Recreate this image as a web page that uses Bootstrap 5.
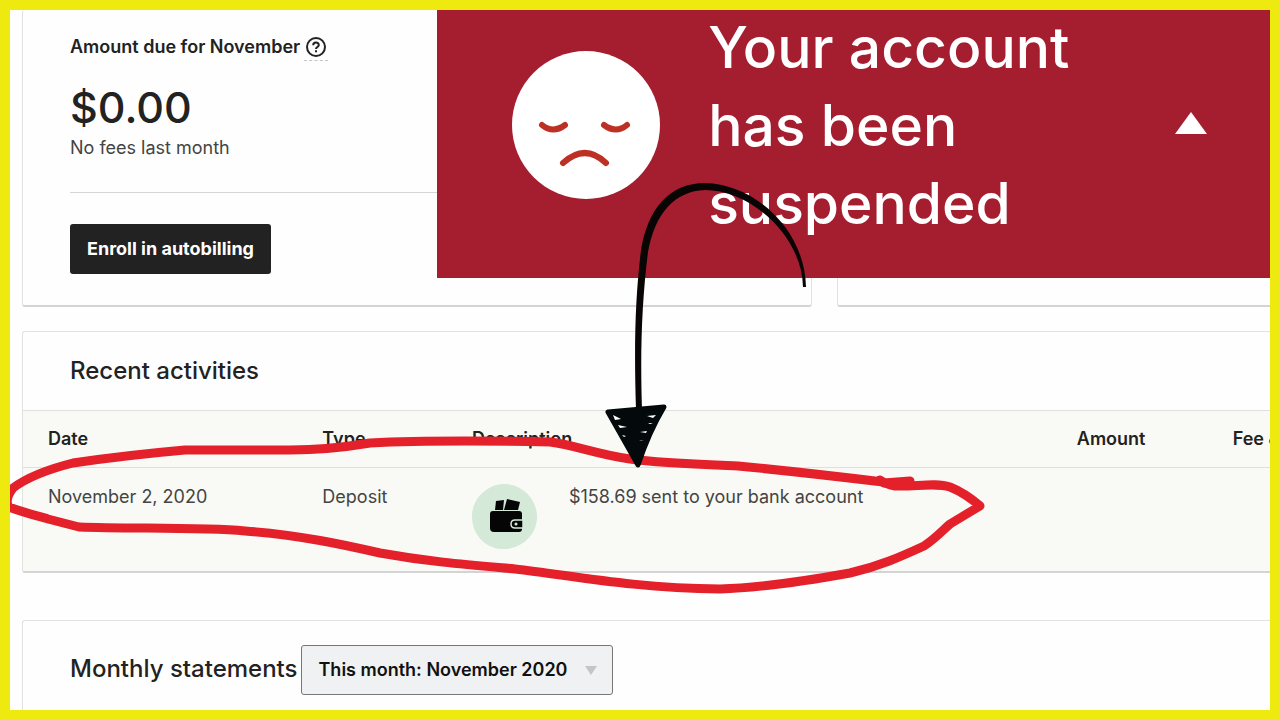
<!DOCTYPE html>
<html lang="en">
<head>
<meta charset="utf-8">
<meta name="viewport" content="width=device-width, initial-scale=1">
<title>Payment account</title>
<link href="https://cdn.jsdelivr.net/npm/bootstrap@5.3.0/dist/css/bootstrap.min.css" rel="stylesheet">
<style>
  body { font-family: Inter, "Liberation Sans", sans-serif; font-size: 18px; line-height: 26px; color: #222; background: #fefefe; }
  .frame { height: 100vh; border: 10px solid #eee90f; }
  .page-body { padding-left: 12px; }
  .summary-grid { display: grid; grid-template-columns: minmax(0, 790fr) minmax(0, 433fr); column-gap: 25px; margin-bottom: 24px; }
  .panel { background: #fefefe; border: 1px solid #e1e3df; border-bottom: 2px solid #d4d4d4; border-radius: 3px; }
  .panel-cut { border-right: 0; border-top-right-radius: 0; border-bottom-right-radius: 0; }
  .summary { border-top: 0; padding: 23px 47px 31px; }
  .due-label { font-size: 18px; line-height: 28px; font-weight: 600; }
  .help { border-bottom: 1px dashed #c4c4c4; width: 24px; height: 28px; color: #222; }
  .due-sum { font-size: 43px; line-height: 56px; font-weight: 500; margin-top: 18px; }
  .soft { color: #444; }
  .divider { margin: 31px 0; border-top: 1px solid #d5d5d5; opacity: 1; }
  .btn-enroll { background: #222; color: #fff; font-size: 18px; font-weight: 700; height: 50px; border-radius: 3px; padding: 0 16px; line-height: 26px; }
  .btn-enroll:hover { background: #000; color: #fff; }
  .panel-title { font-size: 24px; line-height: 32px; font-weight: 500; }
  .panel-head { padding: 23px 47px; }
  .activity { table-layout: fixed; background: #f9faf5; border-top: 1px solid #dfe0dc; }
  .activity th { font-weight: 600; padding: 15px 24px 15px 25px; }
  .activity td { padding: 16px 24px 22px 25px; }
  .activity thead { border-bottom: 1px solid #dfe0dc; }
  .activity .edge { padding-right: 0; overflow: hidden; white-space: nowrap; }
  .c-date { width: 22%; } .c-type { width: 12%; } .c-amount { width: 12.5%; } .c-fee { width: 5%; }
  .wallet { width: 65px; height: 65px; }
  .statements { margin-top: 47px; padding: 24px 47px; border-bottom: 0; height: 120px; }
  .month { appearance: none; width: 312px; height: 50px; border: 1px solid #777; border-radius: 3px; padding: 0 16px; font-weight: 600; color: #111;
    background: #f0f1f2 url("data:image/svg+xml,%3Csvg xmlns='http://www.w3.org/2000/svg' width='12' height='10'%3E%3Cpath d='M0 1h12L6 10z' fill='%23c3c5c6'/%3E%3C/svg%3E") no-repeat right 15px center; }
  .notice { background: #a51e2f; color: #fff; width: 66.1%; height: 268px; padding: 0 63px 38px 75px; }
  .notice-text { font-size: 57px; line-height: 78px; font-weight: 500; max-width: 400px; margin: 2px auto 0 48px; }
  .face { width: 148px; height: 148px; }
</style>
</head>
<body>
<div class="frame position-relative overflow-hidden">
  <main class="page-body">
    <div class="summary-grid">
      <section class="panel summary">
        <div class="due-label d-flex align-items-center">Amount due for November
          <a href="#" class="help ms-1 d-flex align-items-center justify-content-center" aria-label="Help">
            <svg width="20" height="20" viewBox="0 0 20 20" fill="none" stroke="currentColor" stroke-width="2"><circle cx="10" cy="10" r="9"/><path d="M7.2 8.2C7.2 4.600 12.800 4.700 12.800 7.900C12.800 10 10 9.900 10 12"/><path d="M10 13.300v2"/></svg>
          </a>
        </div>
        <div class="due-sum">$0.00</div>
        <div class="soft">No fees last month</div>
        <hr class="divider">
        <button type="button" class="btn btn-enroll">Enroll in autobilling</button>
      </section>
      <section class="panel panel-cut summary"></section>
    </div>

    <section class="panel panel-cut">
      <div class="panel-head"><h2 class="panel-title m-0">Recent activities</h2></div>
      <table class="activity w-100">
        <colgroup><col class="c-date"><col class="c-type"><col><col class="c-amount"><col class="c-fee"></colgroup>
        <thead>
          <tr><th>Date</th><th>Type</th><th>Description</th><th>Amount</th><th class="edge">Fee &amp;</th></tr>
        </thead>
        <tbody>
          <tr class="align-top soft">
            <td>November 2, 2020</td>
            <td>Deposit</td>
            <td>
              <div class="d-flex">
                <svg class="wallet flex-shrink-0 me-4" viewBox="0 0 65 65">
                  <path d="M31 0C48 -1 64 13 65 31C66 50 51 64 33 65C16 66 1 53 0 34C-1 17 13 1 31 0Z" fill="#d4e9d7"/>
                  <path d="M24 17l8-1-1 10h-8z" fill="#050505"/>
                  <path d="M35 15l13 3-2 8H32z" fill="#050505"/>
                  <path d="M21 27H47q3 0 3 3v15q0 3-3 3H22q-4 0-4-4V30q0-3 3-3z" fill="#050505"/>
                  <path d="M51 36H43q-4 0-4 4t4 4h8z" fill="#050505" stroke="#d4e9d7" stroke-width="1.500"/>
                  <circle cx="44" cy="40" r="1.500" fill="#d4e9d7"/>
                </svg>
                <span class="ms-2">$158.69 sent to your bank account</span>
              </div>
            </td>
            <td></td><td></td>
          </tr>
        </tbody>
      </table>
    </section>

    <section class="panel panel-cut statements d-flex align-items-start">
      <label for="month" class="panel-title text-nowrap mt-2 me-1">Monthly statements</label>
      <select id="month" class="month"><option>This month: November 2020</option></select>
    </section>
  </main>

  <aside class="notice position-absolute top-0 end-0 d-flex align-items-center">
    <svg class="face flex-shrink-0" viewBox="0 0 148 148" fill="none" stroke="#bd3024" stroke-width="6" stroke-linecap="round">
      <circle cx="74" cy="74" r="74" fill="#fff" stroke="none"/>
      <path d="M30 74Q41 83 53 74M92 74Q104 83 115 74"/>
      <path d="M51 112Q73 92 94 112"/>
    </svg>
    <p class="notice-text">Your account has been suspended</p>
    <button type="button" class="btn p-0 mb-1 border-0 d-flex" aria-label="Collapse">
      <svg width="32" height="22" viewBox="0 0 32 22"><path d="M16 0L32 22H0z" fill="#fff"/></svg>
    </button>
  </aside>

  <svg class="position-absolute top-0 start-0 pe-none" width="1260" height="700" viewBox="10 10 1260 700" fill="none" aria-hidden="true">
    <g stroke="#e4202b" stroke-width="9" stroke-linejoin="round" stroke-linecap="round">
      <path d="M883 482C850 478 790 471 738 466C690 464 660 463 630 459C595 454 575 445 550 442C500 441 430 440 370 443C340 448 320 450 290 450H185C140 454 100 459 73 463C45 470 25 479 13 488Q4 500 9 507C25 513 38 516 48 519L79 527C130 529 200 527 245 531C300 535 345 545 380 553C430 562 470 565 515 569C570 575 630 588 720 589C760 588 800 582 850 573C880 566 900 557 924 546C935 539 943 530 950 524L980 506Q965 493 950 487C935 482 915 487 895 486Q885 484 880 480"/>
      <path d="M884 483L910 481"/>
    </g>
    <path d="M636 410C634 345 635 300 641 250C648 208 670 183 705 183C755 184 805 230 806 287L803 287C802 235 750 190 705 190C675 191 655 213 648 252C642 300 640 350 642 410Z" fill="#080504"/>
    <path d="M608 412L664 407Q649 432 638 465Z" fill="#040a0b" stroke="#040a0b" stroke-width="5" stroke-linejoin="round"/>
    <path d="M613 415l2 5 6-1zM618 425l2 3 7-1zM622 435l4 1-2 1zM647 416l9-1-3 3zM648 423l5 0-3 1zM640 432l7-1-1 2zM639 441l5-1-3 1z" fill="#fff"/>
  </svg>
</div>
<script src="https://cdn.jsdelivr.net/npm/bootstrap@5.3.0/dist/js/bootstrap.bundle.min.js"></script>
</body>
</html>
